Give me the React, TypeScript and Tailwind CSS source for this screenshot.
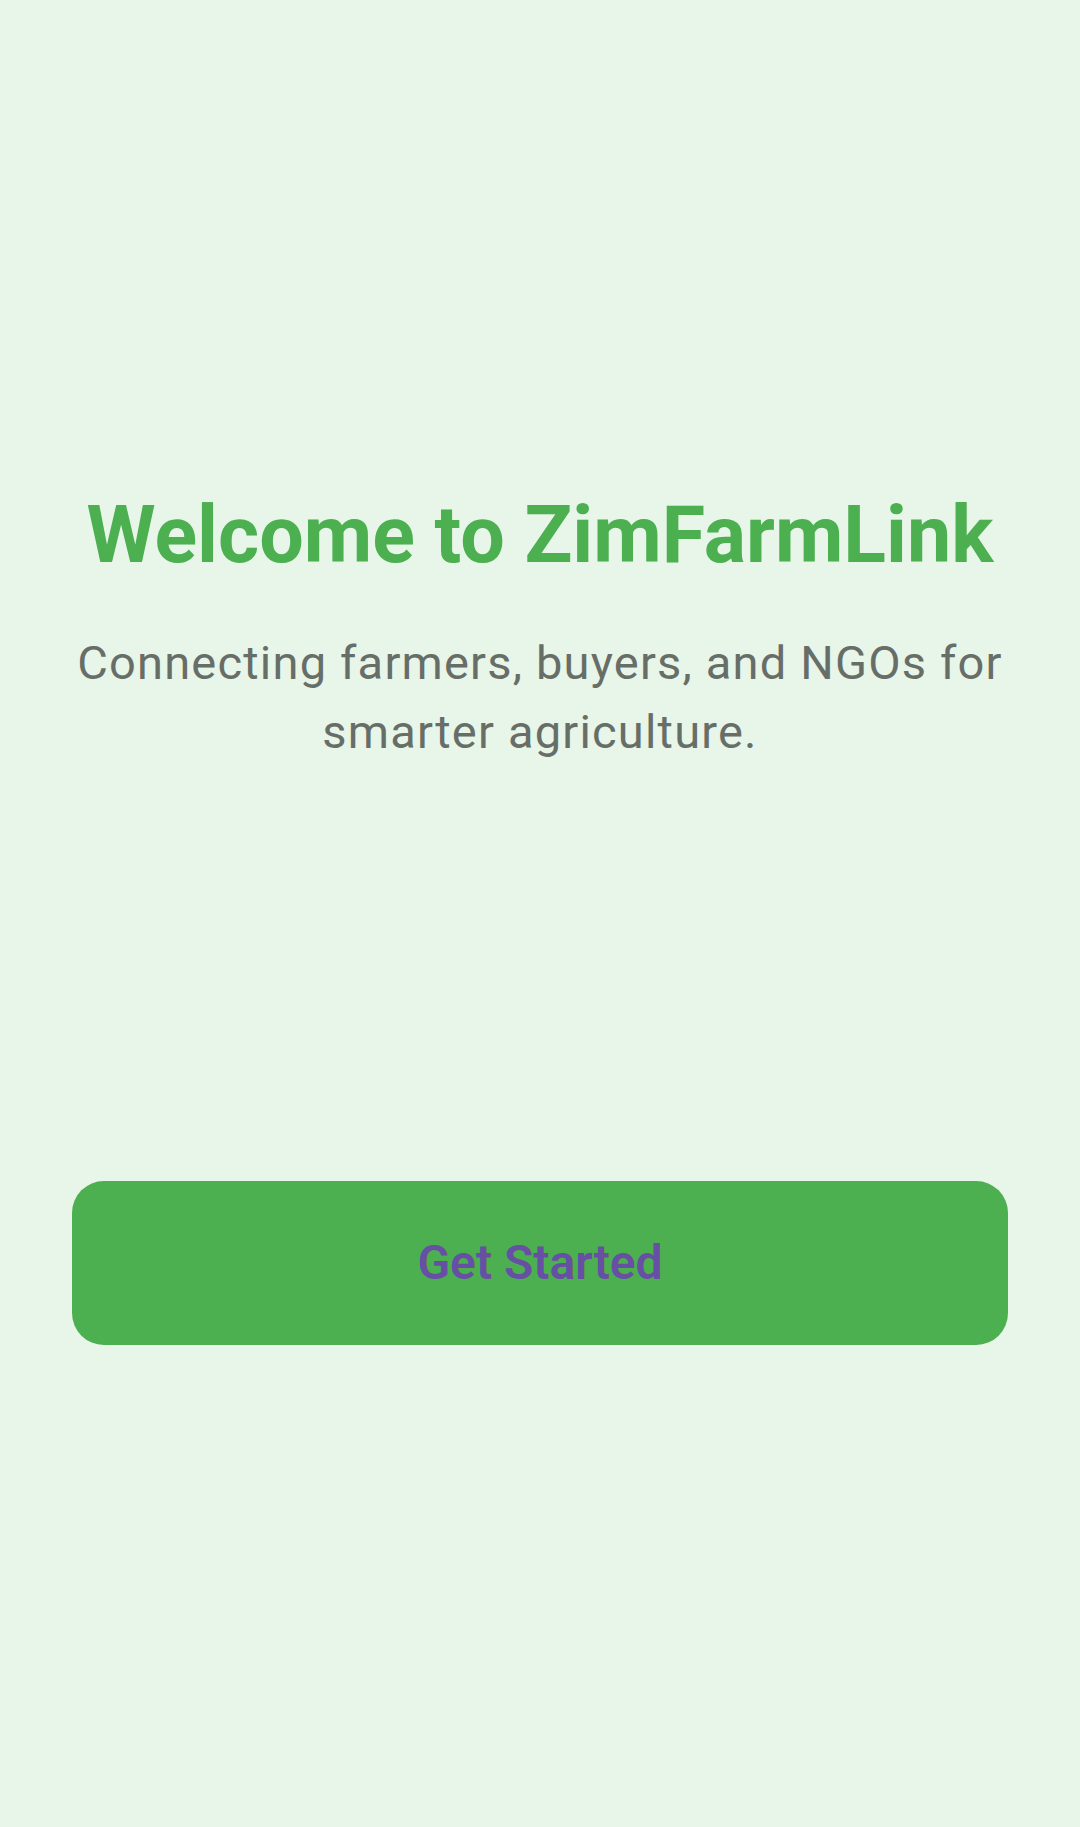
import React from "react";

const App = () => {
  return (
    <div className="min-h-[1827px] w-full bg-[#e8f5e9] flex flex-col px-[72px] pt-[487px] font-['Roboto',sans-serif]">
      {/* heading */}
      <h1 className="text-center text-[79px] leading-[96px] font-bold text-[#4caf50]">
        Welcome to ZimFarmLink
      </h1>
      {/* tagline */}
      <p className="mt-[45px] text-center text-[47px] leading-[69px] tracking-[1.2px] text-[#676e67]">
        Connecting farmers, buyers, and NGOs for smarter agriculture.
      </p>
      <button className="mt-[415px] h-[164px] w-full rounded-[32px] bg-[#4caf50] flex items-center justify-center text-[48px] font-semibold text-[#6750a4]">
        Get Started
      </button>
    </div>
  );
};

export default App;
